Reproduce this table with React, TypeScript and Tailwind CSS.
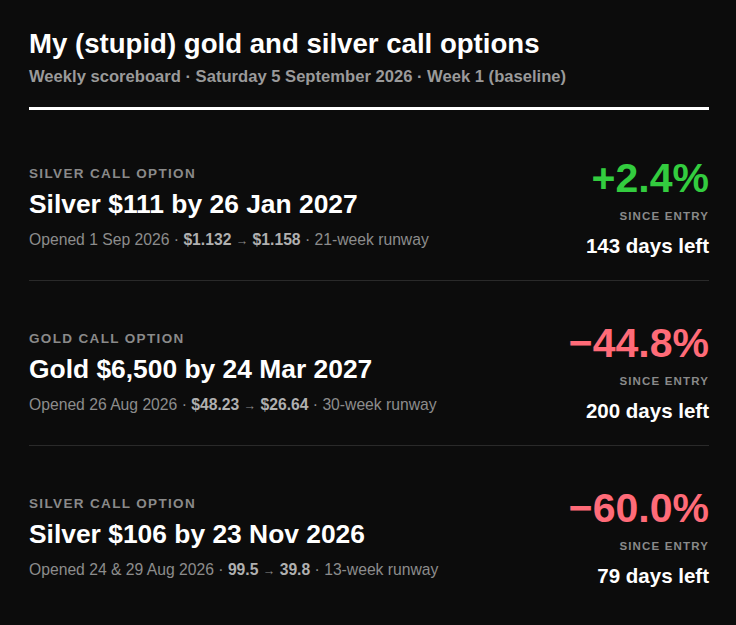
import React from "react";

type Row = {
  kind: string;
  title: string;
  opened: string;
  from: string;
  to: string;
  runway: string;
  pct: string;
  up: boolean;
  days: string;
};

const rows: Row[] = [
  { kind: "SILVER CALL OPTION", title: "Silver $111 by 26 Jan 2027", opened: "Opened 1 Sep 2026", from: "$1.132", to: "$1.158", runway: "21-week runway", pct: "+2.4%", up: true, days: "143 days left" },
  { kind: "GOLD CALL OPTION", title: "Gold $6,500 by 24 Mar 2027", opened: "Opened 26 Aug 2026", from: "$48.23", to: "$26.64", runway: "30-week runway", pct: "\u221244.8%", up: false, days: "200 days left" },
  { kind: "SILVER CALL OPTION", title: "Silver $106 by 23 Nov 2026", opened: "Opened 24 & 29 Aug 2026", from: "99.5", to: "39.8", runway: "13-week runway", pct: "\u221260.0%", up: false, days: "79 days left" },
];

export default function App() {
  return (
    <div className="min-h-[625px] w-full bg-[#0c0c0c] text-white" style={{ fontFamily: '"Liberation Sans", Arial, sans-serif' }}>
      <div className="pl-[29px] pr-[27px] pt-[26px]">
        <h1 className="text-[27.6px] font-bold leading-[36px] text-white">My (stupid) gold and silver call options</h1>
        <p className="mt-[4px] text-[16.6px] font-bold leading-[22px] text-[#9a9a9a]">Weekly scoreboard · Saturday 5 September 2026 · Week 1 (baseline)</p>
        <div className="mt-[19px] h-[3px] bg-white" />
        <div className="mt-[6px]">
          {rows.map((r, i) => (
            <div key={i} className={`flex items-start justify-between pt-[50px] pb-[29px] ${i < rows.length - 1 ? "border-b border-[#2a2a2a]" : ""}`}>
              <div className="flex flex-col">
                <div className="text-[13.5px] font-bold leading-[16px] tracking-[0.1em] text-[#8a8a8a]">{r.kind}</div>
                <div className="mt-[6px] text-[26.4px] font-bold leading-[32px] text-white">{r.title}</div>
                <div className="mt-[10px] text-[15.7px] leading-[20px] text-[#8c8c8c]">
                  {r.opened} · <span className="font-bold text-[#b0b0b0]">{r.from}</span> <span className="text-[12.5px]">→</span> <span className="font-bold text-[#b0b0b0]">{r.to}</span> · {r.runway}
                </div>
              </div>
              <div className="-mt-[10px] -mb-[20px] flex flex-col items-end">
                <div className={`text-[41px] font-bold leading-[44px] ${r.up ? "text-[#33cc3f]" : "text-[#ff6b78]"}`}>{r.pct}</div>
                <div className="mt-[9px] text-[11.5px] font-bold leading-[14px] tracking-[0.1em] text-[#8a8a8a]">SINCE ENTRY</div>
                <div className="mt-[11px] text-[20.5px] font-bold leading-[24px] text-white">{r.days}</div>
              </div>
            </div>
          ))}
        </div>
      </div>
    </div>
  );
}
